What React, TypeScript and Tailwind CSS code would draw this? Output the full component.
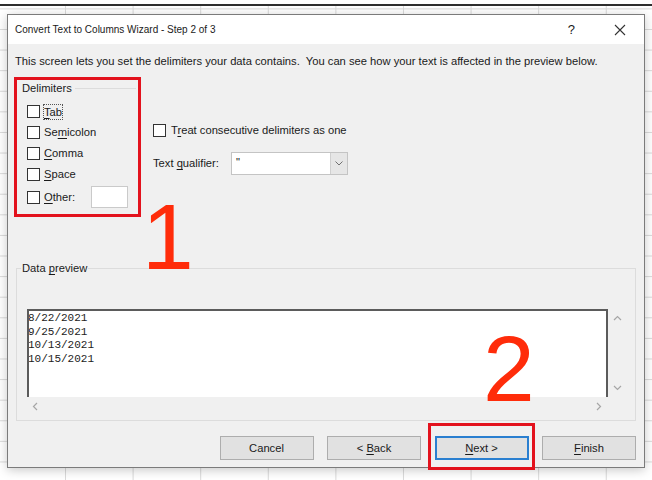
const dates = ["8/22/2021", "9/25/2021", "10/13/2021", "10/15/2021"];

const delimiters = [
  { pre: "", key: "T", post: "ab" },
  { pre: "Se", key: "m", post: "icolon" },
  { pre: "", key: "C", post: "omma" },
  { pre: "", key: "S", post: "pace" },
];

function CheckBox() {
  return <span className="block size-[13px] shrink-0 border border-[#333] bg-white" />;
}

function Label({ pre, k, post }: { pre: string; k: string; post: string }) {
  return (
    <span>
      {pre}
      <u className="underline-offset-[2px]">{k}</u>
      {post}
    </span>
  );
}

function Chevron({ d }: { d: string }) {
  return (
    <svg width="9" height="9" viewBox="0 0 9 9" className="block">
      <path d={d} fill="none" stroke="#a6a6a6" strokeWidth="1.2" />
    </svg>
  );
}

function WizardButton({ children, primary }: { children: React.ReactNode; primary?: boolean }) {
  return (
    <button
      type="button"
      className={`flex h-[24px] w-[94px] items-center justify-center bg-[#e1e1e1] ${
        primary ? "border-2 border-[#2a7fd0]" : "border border-[#adadad]"
      }`}
    >
      {children}
    </button>
  );
}

export default function App() {
  return (
    <div className="relative h-[480px] w-[652px] overflow-hidden bg-white font-['Liberation_Sans',sans-serif] text-[11.2px] text-[#1a1a1a]">
      <div className="h-[4px]" />
      <div className="h-[2px] bg-[#2e2e2e]" />
      <div className="h-[474px] bg-[linear-gradient(to_right,#dadada_1px,transparent_1px),linear-gradient(to_bottom,#dadada_1px,transparent_1px)] bg-[size:67.6px_20.6px] bg-[position:-2.6px_2.4px] pl-[7px] pt-[8px]">
        <div className="flex h-[454px] w-[638px] flex-col border border-[#7b7b7b] bg-white shadow-[0_2px_10px_rgba(0,0,0,0.22)]">
          {/* title bar */}
          <div className="flex h-[29px] shrink-0 items-center pl-[7px] pr-[18px]">
            <span className="text-[10px]">Convert Text to Columns Wizard - Step 2 of 3</span>
            <span className="ml-auto text-[13px]">?</span>
            <svg width="12" height="12" viewBox="0 0 12 12" className="ml-[39px]">
              <path d="M1 1L11 11M11 1L1 11" stroke="#333" strokeWidth="1.1" />
            </svg>
          </div>

          <div className="flex flex-1 flex-col bg-[#f0f0f0]">
            <p className="ml-[7px] mt-[9px] leading-[16px]">
              This screen lets you set the delimiters your data contains.&nbsp; You can see how your text is
              affected in the preview below.
            </p>

            <div className="mt-[8px] flex">
              <div className="ml-[6px] h-[140px] w-[127px] border-[3px] border-[#e3121d] pl-[5px]">
                <div className="flex h-[16px] items-center gap-[3px] pr-[2px] leading-[16px]">
                  <span>Delimiters</span>
                  <span className="h-px flex-1 bg-[#dcdcdc]" />
                </div>
                <div className="mt-[5px] pl-[5px]">
                  {delimiters.map((d, i) => (
                    <div key={d.post} className="flex h-[21px] items-center">
                      <CheckBox />
                      {i === 0 ? (
                        <span className="ml-[3px] border border-dotted border-[#555] leading-[14px]">
                          <Label pre={d.pre} k={d.key} post={d.post} />
                        </span>
                      ) : (
                        <span className="ml-[4px]">
                          <Label pre={d.pre} k={d.key} post={d.post} />
                        </span>
                      )}
                    </div>
                  ))}
                  <div className="flex h-[24px] items-center">
                    <CheckBox />
                    <span className="ml-[4px] w-[47px]">
                      <Label pre="" k="O" post="ther:" />
                    </span>
                    <span className="block h-[22px] w-[37px] border border-[#cacaca] bg-white" />
                  </div>
                </div>
              </div>

              <div className="ml-[12px]">
                <div className="mt-[45px] flex h-[16px] items-center gap-[5px]">
                  <CheckBox />
                  <Label pre="T" k="r" post="eat consecutive delimiters as one" />
                </div>
                <div className="mt-[14px] flex h-[23px] items-center">
                  <span className="w-[78px]">
                    <Label pre="Text " k="q" post="ualifier:" />
                  </span>
                  <div className="flex h-[23px] w-[117px] border border-[#c4c4c4] bg-white">
                    <span className="flex-1 pl-[4px] leading-[18px]">"</span>
                    <span className="flex w-[17px] items-center justify-center border-l border-[#d0d0d0] bg-[#e6e6e6]">
                      <svg width="8" height="5" viewBox="0 0 8 5">
                        <path d="M0.5 0.5L4 4L7.5 0.5" fill="none" stroke="#707070" strokeWidth="1" />
                      </svg>
                    </span>
                  </div>
                </div>
              </div>
            </div>

            <fieldset className="mx-[8px] mt-[43px] h-[161px] border border-[#dcdcdc] pl-[10px]">
              <legend className="-ml-[6px] px-[1px] leading-[16px]">
                <Label pre="Data " k="p" post="review" />
              </legend>
              <div className="mt-[33px] flex">
                <div className="flex flex-col">
                  <div className="h-[88px] w-[581px] overflow-hidden border-x-2 border-t-2 border-[#5b5b5b] bg-white font-['Liberation_Mono',monospace] text-[11px] leading-[13.5px] text-[#222]">
                    <div className="-ml-[1px] pt-[1px]">
                      {dates.map((d) => (
                        <div key={d}>{d}</div>
                      ))}
                    </div>
                  </div>
                  <div className="flex h-[18px] items-center justify-between pl-[4px] pr-[5px]">
                    <Chevron d="M6 1L2.5 4.5L6 8" />
                    <Chevron d="M3 1L6.5 4.5L3 8" />
                  </div>
                </div>
                <div className="flex h-[88px] w-[19px] flex-col items-center justify-between py-[5px]">
                  <Chevron d="M1 6L4.5 2.5L8 6" />
                  <Chevron d="M1 3L4.5 6.5L8 3" />
                </div>
              </div>
            </fieldset>

            <div className="mt-[15px] flex justify-end gap-[13.5px] pr-[8px]">
              <WizardButton>Cancel</WizardButton>
              <WizardButton>
                <Label pre="< " k="B" post="ack" />
              </WizardButton>
              <WizardButton primary>
                <Label pre="" k="N" post="ext >" />
              </WizardButton>
              <WizardButton>
                <Label pre="" k="F" post="inish" />
              </WizardButton>
            </div>
          </div>
        </div>
      </div>

      {/* annotations */}
      <span className="absolute left-[142px] top-[191px] font-['Liberation_Sans',sans-serif] text-[93px] leading-none text-[#ff2c0a]">
        1
      </span>
      <span className="absolute left-[483px] top-[323px] font-['Liberation_Sans',sans-serif] text-[93px] leading-none text-[#ff2c0a]">
        2
      </span>
      <div className="absolute left-[428px] top-[423px] h-[47px] w-[107px] border-[3px] border-[#e3121d]" />
    </div>
  );
}
